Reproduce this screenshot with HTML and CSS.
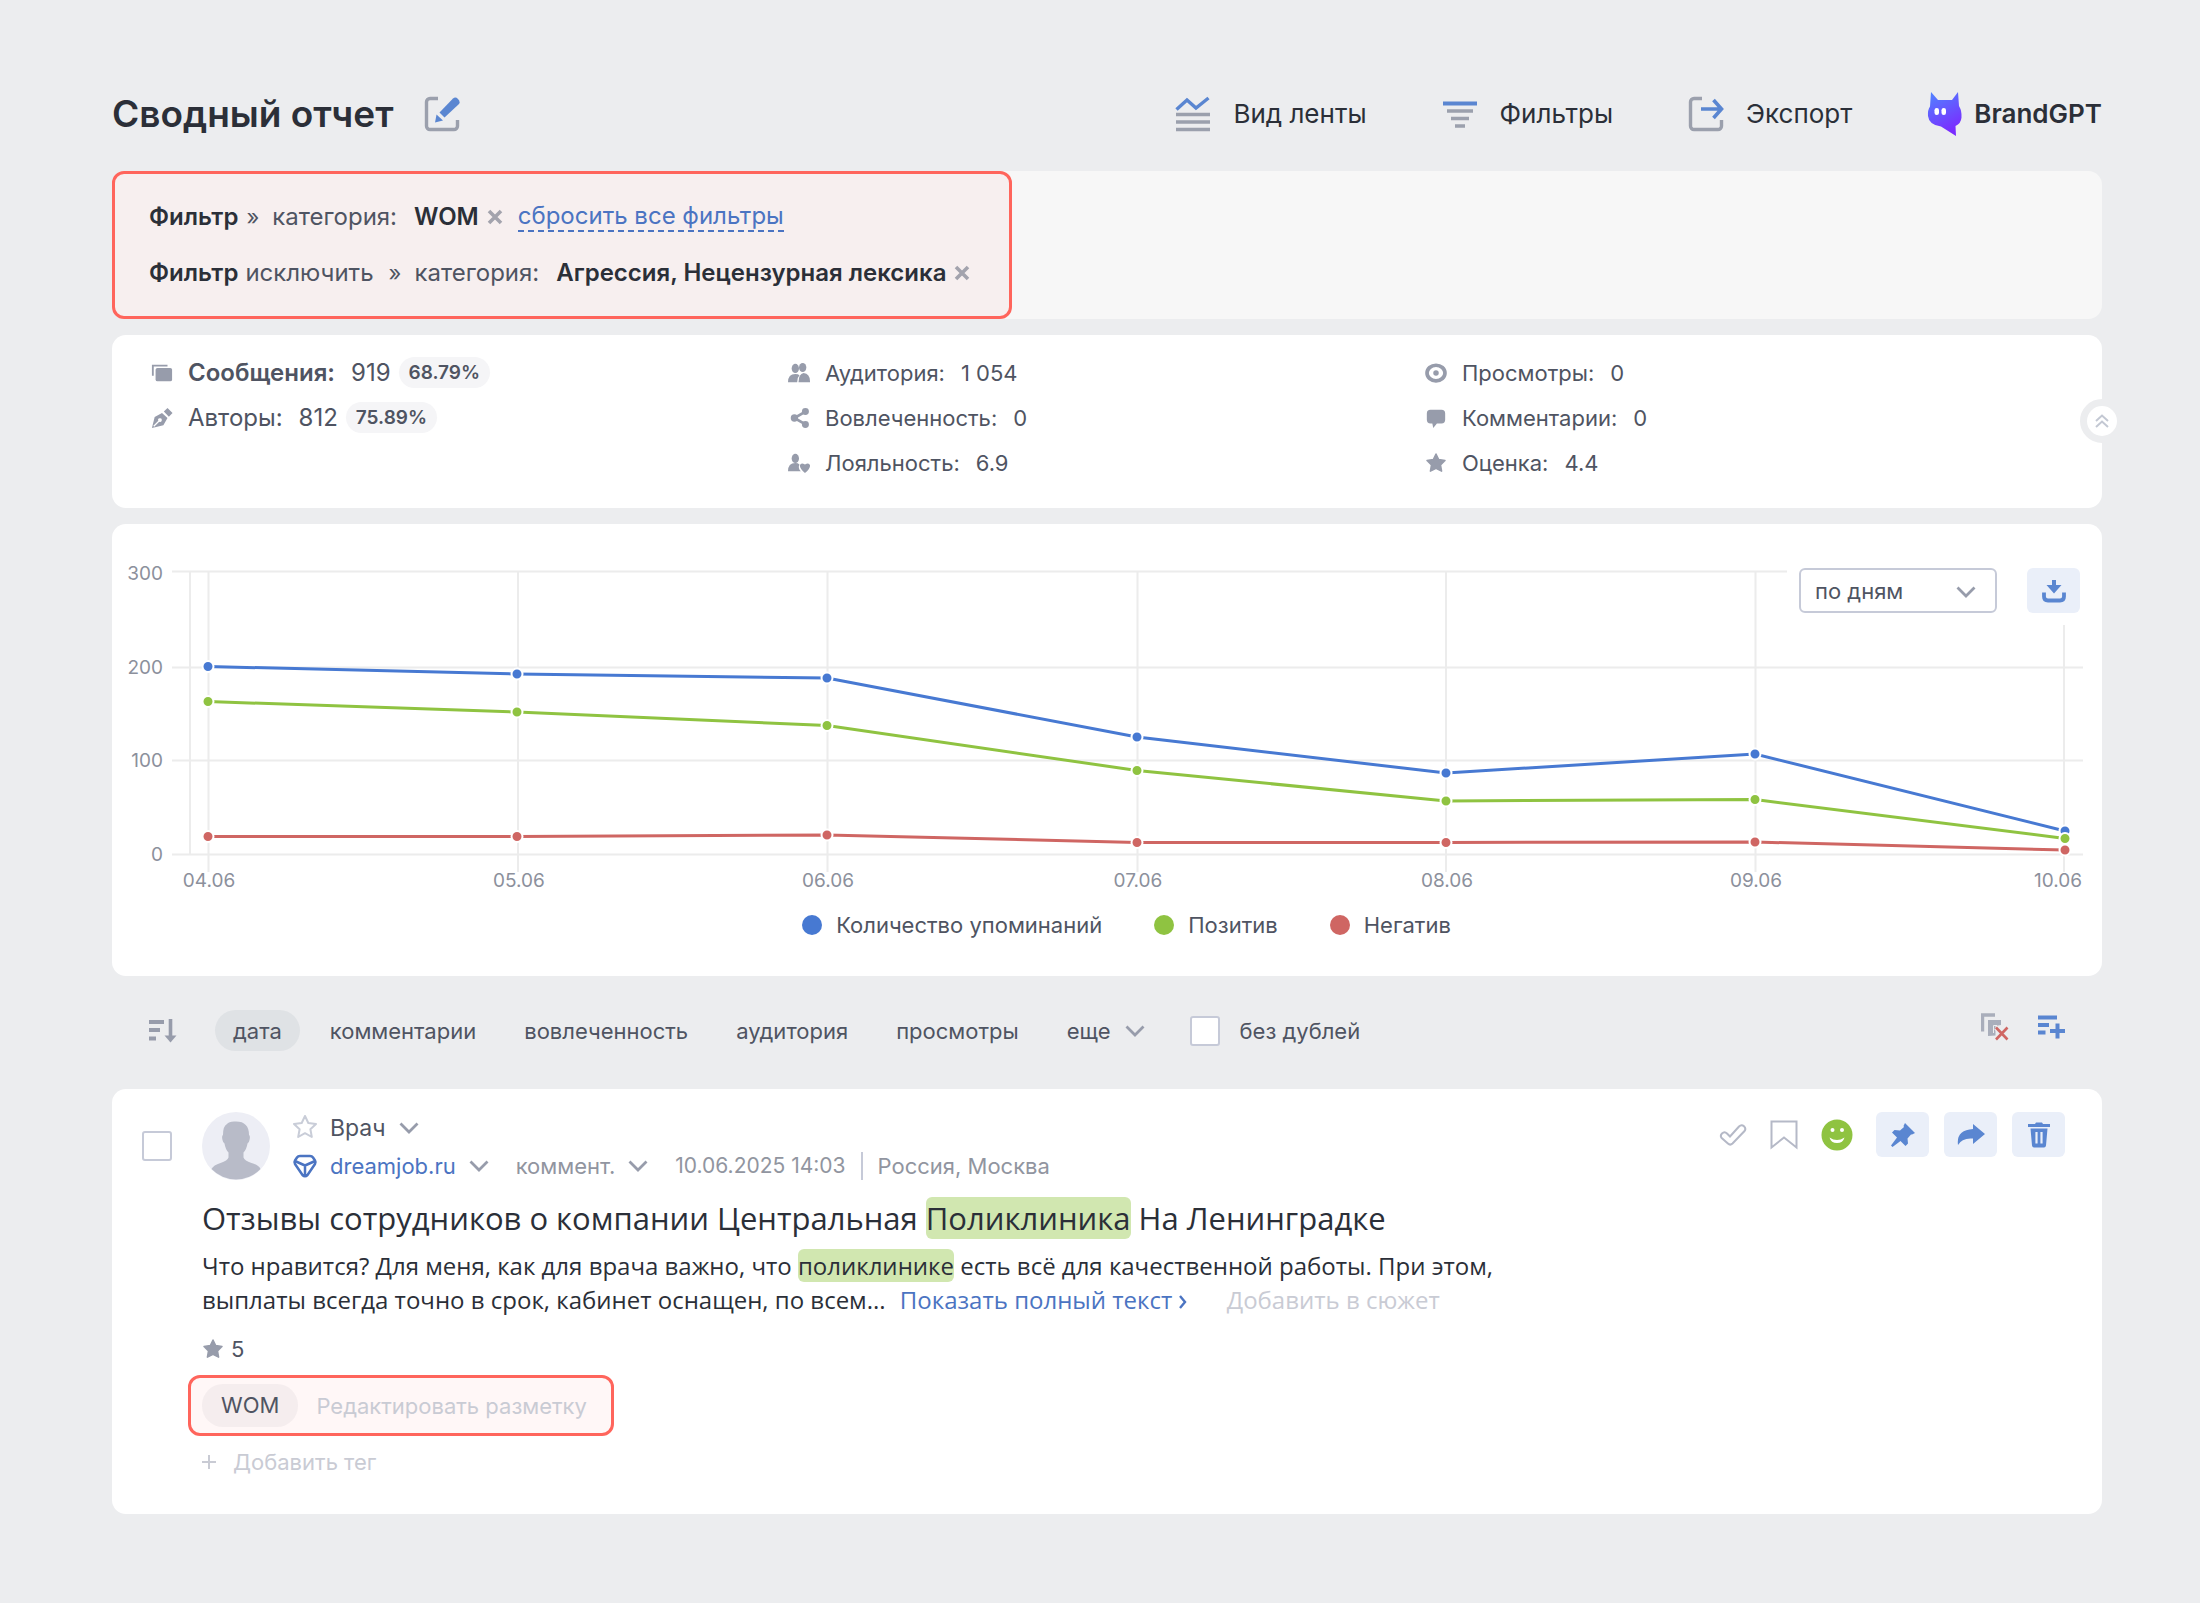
FILE: index.html
```html
<!DOCTYPE html>
<html lang="ru">
<head>
<meta charset="utf-8">
<title>Сводный отчет</title>
<meta name="viewport" content="width=device-width, initial-scale=1">
<link rel="stylesheet" href="styles.css">
</head>
<body>
<svg class="sprite" aria-hidden="true">
  <symbol id="chevron" viewBox="0 0 20 12"><path d="M1.500 1.500 10 10l8.500-8.500" fill="none" stroke="currentColor" stroke-width="2.800"/></symbol>
  <symbol id="cross" viewBox="0 0 16 16"><path d="M2 2l12 12M14 2 2 14" fill="none" stroke="currentColor" stroke-width="3.600"/></symbol>
  <symbol id="star" viewBox="0 0 22 22"><path d="M11 2l2.700 5.600 6.300.9-4.500 4.400 1.100 6.300-5.600-2.900-5.600 2.900 1.100-6.300L2 8.500l6.300-.9z" fill="currentColor" stroke="currentColor" stroke-width="1.500" stroke-linejoin="round"/></symbol>
</svg>
<main class="page">
  <header class="top">
    <div class="top-title">
      <h1>Сводный отчет</h1>
      <button class="plain" type="button" aria-label="Переименовать">
        <svg width="36" height="36" viewBox="0 0 36 36">
          <path d="M14 2.500H6A3.500 3.500 0 0 0 2.500 6v24A3.500 3.500 0 0 0 6 33.500h24a3.500 3.500 0 0 0 3.500-3.500v-6" fill="none" stroke="#9ba0ad" stroke-width="3.400"/>
          <path d="M15.500 16.500 29 2.500q2.500-2 5 .500t1 5L20.500 21.500z" fill="#5a86d1"/>
          <path d="M12.500 18.500l6.500 6-8 2z" fill="#5a86d1"/>
        </svg>
      </button>
    </div>
    <nav class="top-menu">
      <button class="plain menu-item" type="button">
        <svg width="36" height="36" viewBox="0 0 36 36" fill="none">
          <path d="M1.500 13.500 12 4l9 8L33.500 2" stroke="#5a86d1" stroke-width="3.400"/>
          <path d="M1 18.500h34M1 26h34M1 33.500h34" stroke="#9ba0ad" stroke-width="3.600"/>
        </svg>
        Вид ленты
      </button>
      <button class="plain menu-item" type="button">
        <svg width="36" height="36" viewBox="0 0 36 36" fill="none">
          <path d="M1 7.500h34" stroke="#5a86d1" stroke-width="4"/>
          <path d="M5 15h26M9 22.500h18M13 30h10" stroke="#9ba0ad" stroke-width="3.600"/>
        </svg>
        Фильтры
      </button>
      <button class="plain menu-item" type="button">
        <svg width="36" height="36" viewBox="0 0 36 36" fill="none">
          <path d="M14 2.500H6A3.500 3.500 0 0 0 2.500 6v24A3.500 3.500 0 0 0 6 33.500h24a3.500 3.500 0 0 0 3.500-3.500v-6" stroke="#9ba0ad" stroke-width="3.400"/>
          <path d="M13 13h20M25.500 4l8 9-8 9" stroke="#5a86d1" stroke-width="3.600"/>
        </svg>
        Экспорт
      </button>
      <button class="plain menu-item brand" type="button">
        <svg width="36" height="46" viewBox="0 0 36 46">
          <defs><linearGradient id="cat" x1="0" y1="0" x2=".4" y2="1"><stop offset="0" stop-color="#4f86ff"/><stop offset="1" stop-color="#7a2cff"/></linearGradient></defs>
          <path d="M4 1l7 8h14l6-8 1 14q3 5 2.500 11.500-.5 6-6 8.500l.5 10L14 35.500Q2 34 1 25q-.5-6 2-9.500z" fill="url(#cat)"/>
          <rect x="7.500" y="17" width="4.500" height="7" rx="2.200" fill="#fff"/><rect x="14.500" y="17" width="4.500" height="7" rx="2.200" fill="#fff"/>
        </svg>
        BrandGPT
      </button>
    </nav>
  </header>

  <section class="filters" aria-label="Активные фильтры">
    <div class="marked filters-box">
      <div class="filter-row">
        <strong>Фильтр</strong><span class="raquo">»</span>
        <span class="filter-key">категория:</span><strong>WOM</strong>
        <button class="plain cross" type="button" aria-label="Убрать фильтр"><svg width="16" height="16"><use href="#cross"/></svg></button>
        <a class="reset" href="#">сбросить все фильтры</a>
      </div>
      <div class="filter-row">
        <strong>Фильтр</strong><span class="mode">исключить</span><span class="raquo">»</span>
        <span class="filter-key">категория:</span><strong>Агрессия, Нецензурная лексика</strong>
        <button class="plain cross" type="button" aria-label="Убрать фильтр"><svg width="16" height="16"><use href="#cross"/></svg></button>
      </div>
    </div>
  </section>

  <section class="card stats" aria-label="Показатели">
    <ul class="primary">
      <li>
        <svg class="ico" viewBox="0 0 24 24"><path d="M2 15V4h16" fill="none" stroke="currentColor" stroke-width="2"/><rect x="5" y="6.500" width="18" height="14.500" rx="2" fill="currentColor"/></svg>
        <b>Сообщения:</b><span>919</span><em>68.79%</em></li>
      <li>
        <svg class="ico" viewBox="0 0 24 24" fill="currentColor"><path fill-rule="evenodd" d="M1 23 4 11l8-4.500L18 12l-4.500 8zM3.500 21.500l5.500-5.500a2 2 0 1 0-1-1L2.500 20.500zM14 5l4-4 5.500 5.500-4 4z"/></svg>
        <span>Авторы:</span><span>812</span><em>75.89%</em></li>
    </ul>
    <ul>
      <li>
        <svg class="ico" viewBox="0 0 24 24" fill="currentColor"><ellipse cx="8" cy="7" rx="4" ry="5"/><path d="M0 22q0-9 8-9 3 0 4.500 1.500Q10 17 10 22z"/><ellipse cx="16" cy="6" rx="4" ry="5"/><path d="M11.500 22q0-9 5.500-10 7 1 7 9v1z"/></svg>
        <span>Аудитория:</span><span>1&nbsp;054</span></li>
      <li>
        <svg class="ico" viewBox="0 0 24 24" fill="currentColor"><path d="M19 5 7 12l12 7" fill="none" stroke="currentColor" stroke-width="3"/><circle cx="19" cy="5" r="3.800"/><circle cx="7" cy="12" r="4"/><circle cx="19" cy="19" r="3.800"/></svg>
        <span>Вовлеченность:</span><span>0</span></li>
      <li>
        <svg class="ico" viewBox="0 0 24 24" fill="currentColor"><ellipse cx="8" cy="7" rx="4" ry="5"/><path d="M0 21q0-9 8-9 3 0 4.500 1.500-2 4 1.500 7.500z"/><path d="M18.500 23q-6-5-5.500-8.500 1-3.500 5.500-1 4.500-2.500 5.500 1 .5 3.500-5.500 8.500z"/></svg>
        <span>Лояльность:</span><span>6.9</span></li>
    </ul>
    <ul>
      <li>
        <svg class="ico" viewBox="0 0 24 24"><ellipse cx="12" cy="12" rx="9.800" ry="8.500" fill="none" stroke="currentColor" stroke-width="4"/><circle cx="12" cy="12" r="3" fill="currentColor"/></svg>
        <span>Просмотры:</span><span>0</span></li>
      <li>
        <svg class="ico" viewBox="0 0 24 24" fill="currentColor"><path d="M6 3h12q4 0 4 4v7q0 4-4 4h-5l-4 5-1-5H6q-4 0-4-4V7q0-4 4-4z"/></svg>
        <span>Комментарии:</span><span>0</span></li>
      <li>
        <svg class="ico"><use href="#star"/></svg>
        <span>Оценка:</span><span>4.4</span></li>
    </ul>
    <button class="collapse" type="button" aria-label="Свернуть">
      <svg width="16" height="16" viewBox="0 0 16 16"><path d="M2 8l6-5.500L14 8M2 14l6-5.500 6 5.500" fill="none" stroke="#c3c8d3" stroke-width="2"/></svg>
    </button>
  </section>

  <section class="card chart" aria-label="График упоминаний">
    <svg class="plot" viewBox="0 0 1990 376" role="img" aria-label="Динамика упоминаний по дням">
      <g class="grid">
        <path d="M60 47.500h1911M60 143.500h1911M60 236.500h1911M60 330.500h1911M78 47v283"/>
        <path d="M96.500 47v301M406 47v301M715.500 47v301M1025.500 47v301M1334 47v301M1643.500 47v301M1952 47v301"/>
      </g>
      <g class="axis axis-y"><text x="51" y="56">300</text><text x="51" y="150">200</text><text x="51" y="243">100</text><text x="51" y="337">0</text></g>
      <g class="axis axis-x"><text x="97" y="363">04.06</text><text x="407" y="363">05.06</text><text x="716" y="363">06.06</text><text x="1026" y="363">07.06</text><text x="1335" y="363">08.06</text><text x="1644" y="363">09.06</text><text class="last" x="1970" y="363">10.06</text></g>
      <g class="series blue"><polyline points="96,142.500 405,150 715,154 1025,213 1334,249 1643,230 1953,307"/><circle cx="96" cy="142.500" r="5.500"/><circle cx="405" cy="150" r="5.500"/><circle cx="715" cy="154" r="5.500"/><circle cx="1025" cy="213" r="5.500"/><circle cx="1334" cy="249" r="5.500"/><circle cx="1643" cy="230" r="5.500"/><circle cx="1953" cy="307" r="5.500"/></g>
      <g class="series green"><polyline points="96,177.500 405,188 715,201.500 1025,246.500 1334,277 1643,275.500 1953,314.500"/><circle cx="96" cy="177.500" r="5.500"/><circle cx="405" cy="188" r="5.500"/><circle cx="715" cy="201.500" r="5.500"/><circle cx="1025" cy="246.500" r="5.500"/><circle cx="1334" cy="277" r="5.500"/><circle cx="1643" cy="275.500" r="5.500"/><circle cx="1953" cy="314.500" r="5.500"/></g>
      <g class="series red"><polyline points="96,312.500 405,312.500 715,311 1025,318.500 1334,318.500 1643,318 1953,326"/><circle cx="96" cy="312.500" r="5.500"/><circle cx="405" cy="312.500" r="5.500"/><circle cx="715" cy="311" r="5.500"/><circle cx="1025" cy="318.500" r="5.500"/><circle cx="1334" cy="318.500" r="5.500"/><circle cx="1643" cy="318" r="5.500"/><circle cx="1953" cy="326" r="5.500"/></g>
    </svg>
    <div class="chart-tools">
      <span class="select">
        <select aria-label="Шаг графика"><option>по дням</option></select>
        <svg width="20" height="12"><use href="#chevron"/></svg>
      </span>
      <button class="tool" type="button" aria-label="Скачать">
        <svg width="24" height="24" viewBox="0 0 24 24"><path d="M10 1h4v5h5.500L12 14.500 4.500 6H10z" fill="currentColor"/><path d="M2 13.500v4q0 4 4 4h12q4 0 4-4v-4" fill="none" stroke="currentColor" stroke-width="3.800"/></svg>
      </button>
    </div>
    <ul class="legend">
      <li class="blue">Количество упоминаний</li>
      <li class="green">Позитив</li>
      <li class="red">Негатив</li>
    </ul>
  </section>

  <div class="sort">
    <button class="plain order" type="button" aria-label="Порядок сортировки">
      <svg width="28" height="24" viewBox="0 0 28 24"><path d="M0 3h15M0 11h11M0 19.500h7" stroke="currentColor" stroke-width="4"/><path d="M21.500 0v20" stroke="currentColor" stroke-width="3.600"/><path d="M15.500 16.500h12l-6 7z" fill="currentColor"/></svg>
    </button>
    <button class="sort-item active" type="button">дата</button>
    <button class="sort-item" type="button">комментарии</button>
    <button class="sort-item" type="button">вовлеченность</button>
    <button class="sort-item" type="button">аудитория</button>
    <button class="sort-item" type="button">просмотры</button>
    <button class="sort-item" type="button">еще <svg width="20" height="12"><use href="#chevron"/></svg></button>
    <label class="unique"><input class="check" type="checkbox">без дублей</label>
    <div class="sort-tools">
      <button class="plain" type="button" aria-label="Удалить дубли">
        <svg width="28" height="28" viewBox="0 0 28 28"><path d="M1.500 18.500V2H14" fill="none" stroke="#a9aebb" stroke-width="3.400"/><path d="M7 23V7h13v5l-5.500 1v9.500z" fill="#a9aebb"/><path d="M12.500 20v-7.500H16" fill="none" stroke="#ecedef" stroke-width="1"/><path d="M15 14.500 26.500 26.500M26.500 14.500 15 26.500" stroke="#ecedef" stroke-width="5"/><path d="M15 14.500 26.500 26.500M26.500 14.500 15 26.500" stroke="#cf6663" stroke-width="2.600"/></svg>
      </button>
      <button class="plain" type="button" aria-label="Добавить в список">
        <svg width="28" height="28" viewBox="0 0 28 28" stroke="#5a86d1" stroke-width="4"><path d="M1 4.500h19M1 12h11M1 19.500h7.500M13 18h15M20.500 10.500v15"/></svg>
      </button>
    </div>
  </div>

  <article class="card post">
    <input class="check" type="checkbox" aria-label="Выбрать сообщение">
    <div class="post-main">
      <div class="post-head">
        <svg class="avatar" viewBox="0 0 68 68" aria-hidden="true">
          <circle cx="34" cy="34" r="34" fill="#edeef5"/>
          <path d="M25 12q2-3 9-2.500 13 0 13 13.500 1.500 1 .5 5-.5 3-2 3.500-1 6-4 9v5q1 3 8 5.500 7 2 9 6A34 34 0 0 1 9.500 57q2-4 9-6 7-2.500 8-5.500v-5q-3-3-4-9-1.500-.5-2-3.500-1-4 .5-5 0-9 4-11z" fill="#b8bbc8"/>
        </svg>
        <div class="post-meta">
          <div class="meta-row author">
            <svg class="meta-ico" viewBox="0 0 26 26"><path d="M13 1l3.300 7 7.700 1-5.600 5.300 1.400 7.700-6.800-3.800L6.200 22l1.400-7.700L2 9l7.700-1z" fill="none" stroke="#c9cdd8" stroke-width="2" stroke-linejoin="round"/></svg>
            <button class="plain with-chevron" type="button">Врач <svg width="20" height="12"><use href="#chevron"/></svg></button>
          </div>
          <div class="meta-row">
            <svg class="meta-ico" viewBox="0 0 26 26"><path d="M8 3h10q2 0 3 1.500l2 3q1 1.500 0 3.500l-7.500 11q-2.500 2.500-5 0L3 11Q2 9 3 7.500l2-3Q6 3 8 3zM4 8.500l9 4 9-4M13 12.500V23" fill="none" stroke="#4b74c2" stroke-width="2.500" stroke-linejoin="round"/></svg>
            <span class="with-chevron"><a href="#">dreamjob.ru</a> <svg width="20" height="12"><use href="#chevron"/></svg></span>
            <button class="plain with-chevron kind" type="button">коммент. <svg width="20" height="12"><use href="#chevron"/></svg></button>
            <time datetime="2025-06-10T14:03">10.06.2025 14:03</time>
            <span class="place">Россия, Москва</span>
          </div>
        </div>
        <div class="post-tools">
          <button class="plain" type="button" aria-label="Обработано"><svg width="28" height="24" viewBox="0 0 28 24"><path d="M3 10.500q2.500-2.500 5 0l3 3L20 3.500q2.500-2.500 5-.2 2.500 2.400.3 5L13.500 20.500q-2.300 2.200-4.600 0L2.700 15Q.8 12.700 3 10.500z" fill="none" stroke="#b5b9c7" stroke-width="2"/></svg></button>
          <button class="plain" type="button" aria-label="В закладки"><svg width="28" height="30" viewBox="0 0 28 30"><path d="M1.500 1.500h25v26L14 17.500 1.500 27.500z" fill="none" stroke="#b5b9c7" stroke-width="2"/></svg></button>
          <button class="plain" type="button" aria-label="Тональность: позитив"><svg width="32" height="32" viewBox="0 0 32 32"><circle cx="16" cy="16" r="15.500" fill="#8fc341"/><circle cx="11.500" cy="11" r="2" fill="#fff"/><circle cx="21" cy="11" r="2" fill="#fff"/><path d="M8.500 18.500q7.500 5 15 0-1.500 5.500-7.500 5.500t-7.500-5.500z" fill="#fff"/></svg></button>
          <button class="tool" type="button" aria-label="Закрепить"><svg width="24" height="24" viewBox="0 0 24 24" fill="currentColor"><path d="M14 0l10 10-3 1.500-1 0-3.500 4 .5 5-2.500 2.500-5-5L1.500 24 0 22.500 6 14.500 1 9.500 3.500 7l5.500.5L13 4l-.5-1z"/></svg></button>
          <button class="tool" type="button" aria-label="Переслать"><svg width="28" height="22" viewBox="0 0 28 22" fill="currentColor"><path d="M16 0l12 10-12 10v-5.500Q5 13.500 1 21-1 6 16 5z"/></svg></button>
          <button class="tool" type="button" aria-label="Удалить"><svg width="22" height="26" viewBox="0 0 22 26"><path d="M0 2h7L8 .5h6l1 1.500h7v3H0zM2.500 6.500h17l-1.500 17q-.3 2-2 2H6q-1.700 0-2-2z" fill="currentColor"/><path d="M8.500 10v11.500M13.500 10v11.500" stroke="#eaeff9" stroke-width="2.200"/></svg></button>
        </div>
      </div>
      <h2>Отзывы сотрудников о компании Центральная <mark>Поликлиника</mark> На Ленинградке</h2>
      <p class="text">Что нравится? Для меня, как для врача важно, что <mark>поликлинике</mark> есть всё для качественной работы. При этом,<br>выплаты всегда точно в срок, кабинет оснащен, по всем... <a class="more" href="#">Показать полный текст <svg width="8" height="14" viewBox="0 0 8 14"><path d="M1 1l5 6-5 6" fill="none" stroke="currentColor" stroke-width="2.400"/></svg></a> <a class="muted" href="#">Добавить в сюжет</a></p>
      <div class="rating"><svg width="22" height="22"><use href="#star"/></svg>5</div>
      <div class="marked tags"><span class="tag">WOM</span><button class="plain muted" type="button">Редактировать разметку</button></div>
      <button class="plain muted add-tag" type="button"><svg width="14" height="14" viewBox="0 0 14 14"><path d="M7 0v14M0 7h14" stroke="currentColor" stroke-width="2"/></svg>Добавить тег</button>
    </div>
  </article>
</main>
</body>
</html>
```
FILE: styles.css
```css
* { box-sizing: border-box; }

body {
  margin: 0;
  background: #ecedef;
  color: #4f5462;
  font: 22px/32px Inter, "Liberation Sans", sans-serif;
}

h1, h2, p, ul { margin: 0; padding: 0; }
ul { list-style: none; }
svg { display: block; flex: none; }
a { color: #4b74c2; text-decoration: none; }
button, select, input { font: inherit; color: inherit; }

.sprite { position: absolute; width: 0; height: 0; }

.plain {
  border: 0;
  padding: 0;
  background: none;
  cursor: pointer;
}

.page { padding: 57px 98px 88px 112px; }

.card {
  background: #fff;
  border-radius: 14px;
}

.card + .card { margin-top: 16px; }

/* Header */
.top {
  display: flex;
  align-items: center;
  justify-content: space-between;
  height: 114px;
}

.top-title { display: flex; align-items: center; gap: 31px; }

h1 {
  color: #2b2f38;
  font-size: 37px;
  font-weight: 600;
  line-height: 48px;
}

.top-menu { display: flex; align-items: center; gap: 75px; }

.menu-item {
  display: flex;
  align-items: center;
  gap: 22px;
  color: #2b2f38;
  font-size: 26px;
}

.brand { gap: 11px; font-weight: 600; }

/* Active filters */
.filters {
  display: flex;
  margin-bottom: 16px;
  border-radius: 14px;
  background: #f7f7f7;
}

.marked {
  border: 3px solid #ff655c;
  border-radius: 12px;
  background: rgba(255, 40, 60, .04);
}

.filters-box {
  display: flex;
  flex-direction: column;
  gap: 24px;
  padding: 27px 39px 27px 34px;
}

.filter-row { display: flex; align-items: center; font-size: 24px; }
.filter-row strong { color: #2b2f38; font-weight: 600; }
.mode { margin-left: 7px; }
.raquo { margin: 0 13px 0 8px; font-size: 22px; }
.mode + .raquo { margin-left: 15px; }
.filter-key { margin-right: 17px; }
.cross { margin-left: 8px; color: #a3a3ad; }
.reset { margin-left: 15px; border-bottom: 2px dashed #4b74c2; line-height: 28px; }

/* Key figures */
.stats {
  position: relative;
  display: grid;
  grid-template-columns: repeat(3, 1fr);
  padding: 15px 41px 23px 38px;
}

.stats li { display: flex; align-items: center; height: 45px; gap: 16px; }
.stats .primary li { font-size: 24px; }
.ico { width: 22px; height: 22px; margin: 0 -1px 0 1px; color: #979cab; }
.stats b { font-weight: 600; }

.stats em {
  margin-left: -8px;
  padding: 0 10px;
  border-radius: 16px;
  background: #f5f5f7;
  font-size: 19px;
  font-style: normal;
  font-weight: 600;
  line-height: 31px;
}

.collapse {
  position: absolute;
  top: 64px;
  right: -22px;
  display: grid;
  place-items: center;
  width: 44px;
  height: 44px;
  padding: 0;
  border: 7px solid #ecedef;
  border-radius: 50%;
  background: #fff;
}

/* Chart */
.chart { position: relative; padding-bottom: 26px; }
.plot { width: 100%; height: auto; }
.grid { fill: none; stroke: #ececec; stroke-width: 2; }
.axis { fill: #8c909c; font-size: 19px; }
.axis-y { text-anchor: end; }
.axis-x { text-anchor: middle; }
.axis-x .last { text-anchor: end; }

.blue { --tone: #4779d2; }
.green { --tone: #8fc341; }
.red { --tone: #cf6663; }

.series polyline { fill: none; stroke: var(--tone); stroke-width: 3; }
.series circle { fill: var(--tone); stroke: #fff; stroke-width: 2; }

.chart-tools {
  position: absolute;
  top: 32px;
  right: 10px;
  display: flex;
  gap: 30px;
  padding: 12px;
  background: #fff;
}

.select { position: relative; display: block; }

.select select {
  width: 198px;
  height: 45px;
  padding: 0 14px;
  border: 2px solid #c6cad8;
  border-radius: 6px;
  background: #fff;
  appearance: none;
}

.select svg { position: absolute; top: 18px; right: 21px; color: #979cab; pointer-events: none; }

.tool {
  display: grid;
  place-items: center;
  width: 53px;
  height: 45px;
  padding: 0;
  border: 0;
  border-radius: 6px;
  background: #eaeff9;
  color: #5a86d1;
}

.legend {
  display: flex;
  justify-content: center;
  gap: 52px;
  margin-left: 39px;
  line-height: 50px;
}

.legend li { display: flex; align-items: center; gap: 14px; }
.legend li::before { content: ""; width: 20px; height: 20px; border-radius: 50%; background: var(--tone); }

/* Sorting */
.sort {
  display: flex;
  align-items: center;
  gap: 12px;
  padding: 34px 37px 38px;
}

.order { margin-right: 26px; color: #979cab; }

.sort-item {
  display: flex;
  align-items: center;
  gap: 14px;
  height: 41px;
  padding: 0 18px;
  border: 0;
  border-radius: 21px;
  background: none;
}

.sort-item.active { background: #dfe2e5; }
.sort-item svg, .with-chevron svg { color: #979cab; }
.unique { display: flex; align-items: center; gap: 20px; margin-left: 15px; }

.check {
  width: 30px;
  height: 30px;
  margin: 0;
  border: 2px solid #c6cad8;
  border-radius: 3px;
  background: #fff;
  appearance: none;
}

.sort-tools { display: flex; gap: 28px; margin: 0 0 8px auto; }

/* Message */
.post {
  display: grid;
  grid-template-columns: 30px 1fr;
  gap: 30px;
  padding: 23px 37px 36px 30px;
}

.post > .check { margin-top: 19px; }
.post-head { display: flex; align-items: flex-start; }
.avatar { width: 68px; height: 68px; }
.post-meta { display: grid; gap: 3px; margin-left: 22px; }
.meta-row { display: flex; align-items: center; height: 38px; color: #9195a0; }
.author { color: #4f5462; font-size: 23px; height: 32px; }
.meta-ico { width: 26px; height: 26px; margin-right: 12px; }
.with-chevron { display: flex; align-items: center; gap: 13px; }
.kind { margin: 0 27px; }
time { font-size: 21px; }
.place { margin-left: 15px; padding-left: 15px; border-left: 2px solid #c6cad8; line-height: 28px; }

.post-tools { display: flex; align-items: center; gap: 15px; margin-left: auto; }
.post-tools .plain { margin-right: 8px; }

h2, .text { color: #2b2f38; font-family: "Open Sans", "Noto Sans", sans-serif; }
h2 { margin-top: 9px; font-size: 31px; font-weight: 400; line-height: 48px; }
.text { margin-top: 7px; font-size: 24px; line-height: 34px; }

mark { border-radius: 6px; background: #d1e7b0; color: inherit; }
.more { margin: 0 34px 0 8px; }
.more svg { display: inline-block; }
.muted { color: #c9cbd4; }

.rating { display: flex; align-items: center; gap: 7px; margin-top: 15px; line-height: 34px; color: #4f5462; }
.rating svg { color: #979cab; }

.tags {
  display: flex;
  width: fit-content;
  align-items: center;
  gap: 18px;
  margin: 9px 0 0 -14px;
  padding: 6px 24px 6px 11px;
}

.tag { padding: 0 19px; border-radius: 21px; background: rgba(80, 84, 98, .06); line-height: 43px; }
.add-tag { display: flex; align-items: center; gap: 17px; margin-top: 10px; }
```
